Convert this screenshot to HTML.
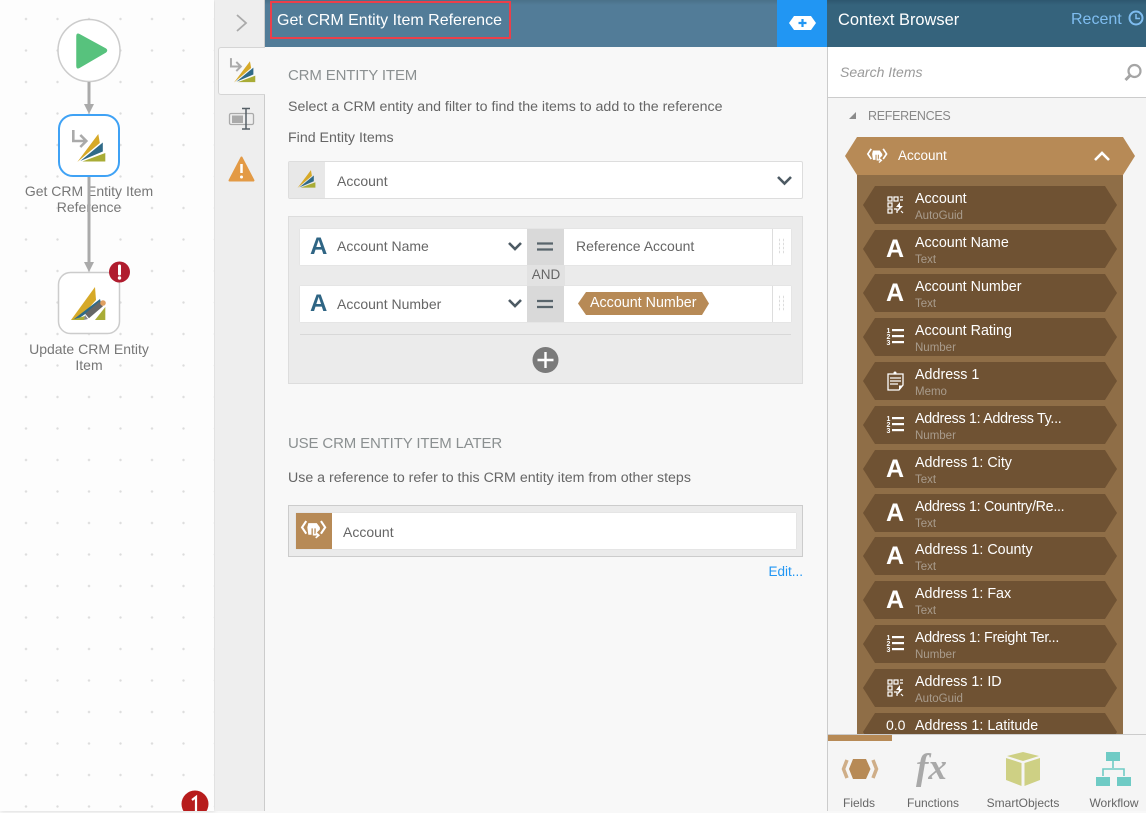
<!DOCTYPE html>
<html><head><meta charset="utf-8"><title>Get CRM Entity Item Reference</title>
<style>
html,body{margin:0;padding:0}
body{width:1146px;height:811px;overflow:hidden;position:relative;background:#f8f8f8;font-family:"Liberation Sans",sans-serif;font-size:14px;color:#666}
.a{position:absolute}
.t{position:absolute;white-space:nowrap;line-height:20px}
.c{text-align:center}
#canvas{left:0;top:0;width:214px;height:811px;background-color:#fdfdfd;background-image:radial-gradient(circle at center,#dcdcdc 0,#dcdcdc 1px,transparent 1.3px);background-size:31.5px 31.5px;background-position:10.25px 3.25px;box-shadow:1px 0 4px rgba(0,0,0,.15)}
#strip{left:215px;top:0;width:49px;height:811px;background:#eee;border-right:1px solid #ccc}
#tab{left:218px;top:47px;width:47px;height:48px;background:#f8f8f8;border:1px solid #d5d5d5;border-right:none;border-radius:3px 0 0 3px;box-sizing:border-box}
#head{left:265px;top:0;width:512px;height:47px;background:linear-gradient(#4a7189 0,#527c98 5px)}
#plus{left:777px;top:0;width:50px;height:47px;background:#2196f3}
#chead{left:827px;top:0;width:319px;height:47px;background:linear-gradient(#2d576f 0,#35637c 5px)}
#redbox{left:270px;top:1px;width:237px;height:34px;border:2px solid #ec3f4a}
#panel{left:827px;top:47px;width:319px;height:764px;background:#f5f5f5;border-left:1px solid #ccc;box-sizing:border-box}
#search{left:828px;top:47px;width:318px;height:50px;background:#fff;border-bottom:1px solid #ccc}
#fold{left:845px;top:137px;width:290px;height:38px;background:#b78a56;clip-path:polygon(12px 0,278px 0,100% 50%,278px 100%,12px 100%,0 50%)}
#list{left:857px;top:175px;width:266px;height:559px;background:#8f6e47;overflow:hidden}
.r{position:absolute;left:6px;width:254px;height:38px;background:#6f5233;clip-path:polygon(12px 0,242px 0,100% 50%,242px 100%,12px 100%,0 50%)}
.r b{position:absolute;left:52px;top:3px;font-weight:normal;font-size:14.3px;line-height:20px;color:#fff;white-space:nowrap}
.r i{position:absolute;left:52px;top:22px;font-style:normal;font-size:11.5px;line-height:16px;color:#a99c8d;white-space:nowrap}
.r u{position:absolute;left:18px;top:4px;width:28px;text-align:center;text-decoration:none;font-weight:bold;font-size:25px;line-height:30px;color:#fff}
.r b.n{letter-spacing:-.3px}
#bot{left:828px;top:734px;width:318px;height:77px;background:#f5f5f5;border-top:1px solid #ccc;box-sizing:border-box}
#bar{left:828px;top:735px;width:64px;height:6px;background:#b78a56}
#icons{position:absolute;left:0;top:0;pointer-events:none}
.h{font-size:15px;letter-spacing:-.15px;color:#8b9091}
.lbl{color:#777;font-size:14px;width:170px;left:4px;text-align:center}
.tb{font-size:12px;color:#666;text-align:center;width:90px;top:793px}
</style></head>
<body>
<div class="a" id="canvas"></div>
<div class="a" id="strip"></div>
<div class="a" id="tab"></div>
<div class="a" id="head"></div>
<div class="a" id="plus"></div>
<div class="a" id="chead"></div>
<div class="a" id="redbox"></div>
<div class="a" id="panel"></div>
<div class="a" id="search"></div>

<div class="t" style="left:277px;top:11px;font-size:16px;color:#fff">Get CRM Entity Item Reference</div>
<div class="t" style="left:838px;top:10px;font-size:16.4px;color:#fff">Context Browser</div>
<div class="t" style="left:1071px;top:10px;font-size:16px;color:#7fbdf0">Recent</div>
<div class="t" style="left:840px;top:62px;font-style:italic;color:#9a9a9a">Search Items</div>
<div class="t" style="left:868px;top:106px;color:#888;font-size:12.5px;letter-spacing:-.3px">REFERENCES</div>

<div class="t lbl" style="top:181px">Get CRM Entity Item</div>
<div class="t lbl" style="top:197px">Reference</div>
<div class="t lbl" style="top:339px">Update CRM Entity</div>
<div class="t lbl" style="top:355px">Item</div>

<div class="t h" style="left:288px;top:66px">CRM ENTITY ITEM</div>
<div class="t" style="left:288px;top:97px;font-size:14.2px">Select a CRM entity and filter to find the items to add to the reference</div>
<div class="t" style="left:288px;top:128px;font-size:14.2px">Find Entity Items</div>

<div class="a" style="left:288px;top:161px;width:513px;height:36px;background:#fff;border:1px solid #ddd;border-radius:2px"></div>
<div class="a" style="left:289px;top:162px;width:36px;height:36px;background:#e8e8e8"></div>
<div class="t" style="left:337px;top:171px;color:#666">Account</div>

<div class="a" style="left:288px;top:216px;width:513px;height:166px;background:#ebebeb;border:1px solid #ddd"></div>
<div class="a" style="left:300px;top:229px;width:491px;height:36px;background:#fff;box-shadow:0 0 1px #ccc"></div>
<div class="a" style="left:300px;top:286px;width:491px;height:36px;background:#fff;box-shadow:0 0 1px #ccc"></div>
<div class="a" style="left:527px;top:229px;width:37px;height:36px;background:#d9d9d9"></div>
<div class="a" style="left:527px;top:265px;width:38px;height:21px;background:#e2e2e2"></div>
<div class="a" style="left:527px;top:286px;width:37px;height:36px;background:#d9d9d9"></div>
<div class="a" style="left:772px;top:229px;width:1px;height:36px;background:#ddd"></div>
<div class="a" style="left:772px;top:286px;width:1px;height:36px;background:#ddd"></div>
<div class="a" style="left:300px;top:334px;width:491px;height:1px;background:#d8d8d8"></div>
<div class="t" style="left:310px;top:232px;font-weight:bold;font-size:24px;line-height:30px;color:#2f6584">A</div>
<div class="t" style="left:310px;top:289px;font-weight:bold;font-size:24px;line-height:30px;color:#2f6584">A</div>
<div class="t" style="left:337px;top:236px;color:#666">Account Name</div>
<div class="t" style="left:337px;top:294px;color:#666">Account Number</div>
<div class="t" style="left:576px;top:236px;color:#666">Reference Account</div>
<div class="t c" style="left:527px;top:265px;width:38px;color:#666;font-size:13.5px">AND</div>
<div class="a" style="left:578px;top:292px;width:131px;height:23px;background:#b78a56;clip-path:polygon(8px 0,124px 0,100% 50%,124px 100%,8px 100%,0 50%)"></div>
<div class="t" style="left:590px;top:293px;color:#fff;font-size:14.3px">Account Number</div>

<div class="t h" style="left:288px;top:434px">USE CRM ENTITY ITEM LATER</div>
<div class="t" style="left:288px;top:468px;font-size:14.2px">Use a reference to refer to this CRM entity item from other steps</div>
<div class="a" style="left:288px;top:505px;width:513px;height:50px;background:#ebebeb;border:1px solid #ccc"></div>
<div class="a" style="left:296px;top:513px;width:500px;height:36px;background:#fff;box-shadow:0 0 1px #ccc"></div>
<div class="a" style="left:296px;top:513px;width:36px;height:36px;background:#b78a56"></div>
<div class="t" style="left:343px;top:522px;color:#666">Account</div>
<div class="t" style="right:343px;top:562px;color:#2196f3;font-size:13.5px">Edit...</div>

<div class="a" id="fold"></div>
<div class="t" style="left:898px;top:146px;color:#fff;font-size:13.5px">Account</div>

<div class="a" id="list">
<div class="r" style="top:11px"><svg class="a" style="left:18px;top:5px" width="28" height="28"><use href="#guid"/></svg><b>Account</b><i>AutoGuid</i></div>
<div class="r" style="top:55px"><u>A</u><b>Account Name</b><i>Text</i></div>
<div class="r" style="top:99px"><u>A</u><b>Account Number</b><i>Text</i></div>
<div class="r" style="top:143px"><svg class="a" style="left:18px;top:5px" width="28" height="28"><use href="#num"/></svg><b>Account Rating</b><i>Number</i></div>
<div class="r" style="top:187px"><svg class="a" style="left:18px;top:5px" width="28" height="28"><use href="#memo"/></svg><b>Address 1</b><i>Memo</i></div>
<div class="r" style="top:231px"><svg class="a" style="left:18px;top:5px" width="28" height="28"><use href="#num"/></svg><b class="n">Address 1: Address Ty...</b><i>Number</i></div>
<div class="r" style="top:275px"><u>A</u><b>Address 1: City</b><i>Text</i></div>
<div class="r" style="top:319px"><u>A</u><b class="n">Address 1: Country/Re...</b><i>Text</i></div>
<div class="r" style="top:362px"><u>A</u><b>Address 1: County</b><i>Text</i></div>
<div class="r" style="top:406px"><u>A</u><b>Address 1: Fax</b><i>Text</i></div>
<div class="r" style="top:450px"><svg class="a" style="left:18px;top:5px" width="28" height="28"><use href="#num"/></svg><b class="n">Address 1: Freight Ter...</b><i>Number</i></div>
<div class="r" style="top:494px"><svg class="a" style="left:18px;top:5px" width="28" height="28"><use href="#guid"/></svg><b>Address 1: ID</b><i>AutoGuid</i></div>
<div class="r" style="top:538px"><div class="t" style="left:23px;top:2px;color:#fff;font-size:14px">0.0</div><b>Address 1: Latitude</b></div>
</div>

<div class="a" id="bot"></div>
<div class="a" id="bar"></div>
<div class="t tb" style="left:814px">Fields</div>
<div class="t tb" style="left:888px">Functions</div>
<div class="t tb" style="left:978px">SmartObjects</div>
<div class="t tb" style="left:1069px">Workflow</div>
<div class="t" style="left:916px;top:749px;font-family:'Liberation Serif',serif;font-style:italic;font-weight:bold;font-size:37px;line-height:38px;color:#a9a9a9">fx</div>

<svg id="icons" width="1146" height="811" viewBox="0 0 1146 811">
<defs>
<g id="crm"><polygon points="0,0 21,-28 22.5,-19" fill="#d6a928"/><polygon points="3,-1 25.5,-19.5 25.5,-10.5" fill="#2f6a88"/><polygon points="5,-.5 28,-9 28,-.5" fill="#a9ac36"/></g>
<g id="arr" fill="none" stroke="#aaa" stroke-width="2.6"><path d="M-4,-32V-21H8.5M3,-27L9,-21L3,-15"/></g>
<g id="ref" fill="none" stroke="#fff"><path d="M5,1L1,7L5,13M19,1L23,7L19,13" stroke-width="2"/><path d="M7,3H15L18,7V9L15,12H14V8H10V14H7L6,7Z" fill="#fff" stroke="none"/><path d="M12,7V14H16M14,12L17,14.500L14,17" stroke-width="1.500"/></g>
<g id="guid" fill="none" stroke="#fff" stroke-width="1.200"><rect x="7" y="6" width="4" height="4"/><rect x="13" y="6" width="4" height="4"/><rect x="7" y="12" width="4" height="4"/><rect x="7" y="18" width="4" height="4"/><path d="M19,6h3M19,9h3M13,18h3v4M20,20l2,2"/><path d="M19,11L15,16H18L16,21L22,15H19Z" fill="#fff" stroke="none"/></g>
<g id="num" fill="#fff"><rect x="11" y="6" width="12" height="2.200"/><rect x="11" y="12" width="12" height="2.200"/><rect x="11" y="18" width="12" height="2.200"/><text x="5.500" y="10" font-size="7" font-weight="bold" font-family="Liberation Sans">1</text><text x="5.500" y="16" font-size="7" font-weight="bold" font-family="Liberation Sans">2</text><text x="5.500" y="22" font-size="7" font-weight="bold" font-family="Liberation Sans">3</text></g>
<g id="memo"><path d="M7,7H22V18L18,23H7Z" fill="none" stroke="#fff" stroke-width="1.300"/><path d="M9,11H20M9,14H20M9,17H17" stroke="#fff" stroke-width="1.300"/><circle cx="14" cy="6" r="1.500" fill="#fff"/><path d="M18,23V18.500H22Z" fill="#fff"/></g>
</defs>

<!-- flow -->
<circle cx="89" cy="50.500" r="31" fill="#fff" stroke="#ccc" stroke-width="1.500"/>
<path d="M79,34.500L105.500,49Q107.500,50.500 105.500,52L79,67.500Q77,68.500 77,66V36Q77,33.500 79,34.500Z" fill="#57c27d" stroke="#57c27d" stroke-width="1.500"/>
<path d="M89,82V105M89,177V264" stroke="#aaa" stroke-width="3"/>
<polygon points="84,104 94,104 89,114" fill="#aaa"/>
<polygon points="84,262 94,262 89,272" fill="#aaa"/>
<rect x="59" y="115" width="60" height="61" rx="14" fill="#fff" stroke="#3fa2f5" stroke-width="2"/>
<use href="#arr" transform="translate(77.300,162)"/><use href="#crm" transform="translate(77.300,162)"/>
<rect x="58.500" y="272.500" width="61" height="61" rx="12" fill="#fff" stroke="#ccc" stroke-width="1.500"/>
<polygon points="71,320 95,287 96,300 78,320" fill="#d6a928"/>
<polygon points="74,319 100,299 101,303 78,319" fill="#2f6a88"/>
<polygon points="71,320 85,316 84,320" fill="#a9ac36"/><polygon points="95,320 105.300,307 105.300,320" fill="#a9ac36"/>
<path d="M87,316L101,304" stroke="#666" stroke-width="6"/><circle cx="103" cy="303" r="2.800" fill="#e0a060"/><polygon points="85,315 88,319 84,320" fill="#888"/>
<circle cx="119.500" cy="272" r="10.500" fill="#b01c2e"/>
<path d="M119.500,266V274" stroke="#fff" stroke-width="3" stroke-linecap="round"/><circle cx="119.500" cy="278" r="1.700" fill="#fff"/>
<circle cx="195" cy="804" r="13.500" fill="#b71c1c"/>
<path d="M192,800L196,797V811" fill="none" stroke="#fff" stroke-width="2.200"/>

<!-- side strip -->
<path d="M237,15L246,23L237,31" fill="none" stroke="#aaa" stroke-width="1.800"/>
<g transform="translate(234,82.500) scale(.76)"><use href="#arr"/><use href="#crm"/></g>
<rect x="229.500" y="113.500" width="24" height="11" rx="1.500" fill="none" stroke="#aaa" stroke-width="1.300"/><rect x="232" y="115.500" width="11" height="7.500" fill="#aaa"/>
<path d="M242,108.500H250M246,108.500V129M242,129H250" stroke="#555f66" stroke-width="1.500" fill="none"/>
<path d="M241.500,157.500L253.500,180.500H229.500Z" fill="#e39a45" stroke="#e39a45" stroke-width="2" stroke-linejoin="round"/>
<path d="M241.500,164V173" stroke="#fff" stroke-width="2.500"/><circle cx="241.500" cy="177" r="1.500" fill="#fff"/>

<!-- head plus -->
<polygon points="789,23 794,16 811,16 816,23 811,30 794,30" fill="#fff"/>
<path d="M802.500,19V27M798.500,23H806.500" stroke="#2196f3" stroke-width="2.200"/>
<circle cx="1136" cy="18" r="6.500" fill="none" stroke="#7fbdf0" stroke-width="2"/><path d="M1136,14V18.500H1140" fill="none" stroke="#7fbdf0" stroke-width="1.500"/>
<circle cx="1134.500" cy="71" r="6" fill="none" stroke="#a5a5a5" stroke-width="2.200"/><path d="M1130,75.500L1125.500,80" stroke="#a5a5a5" stroke-width="3"/>
<polygon points="849,119 856,119 856,112" fill="#8b8b8b"/>

<!-- select -->
<g transform="translate(297.500,188) scale(.64)"><use href="#crm"/></g>
<path d="M778,177L784.500,183.500L791,177" fill="none" stroke="#4d5a63" stroke-width="2.600"/>
<path d="M509,243L515,249L521,243M509,300L515,306L521,300" fill="none" stroke="#4d5a63" stroke-width="2.600"/>
<path d="M537,243.500H553M537,249.500H553M537,301H553M537,307H553" stroke="#59656c" stroke-width="2.200"/>
<path d="M779,240h1M783,240h1M779,244h1M783,244h1M779,248h1M783,248h1M779,252h1M783,252h1M779,297h1M783,297h1M779,301h1M783,301h1M779,305h1M783,305h1M779,309h1M783,309h1" stroke="#ddd" stroke-width="2.500"/>
<circle cx="545.500" cy="360" r="13" fill="#7a7a7a"/>
<path d="M545.500,352V368M537.500,360H553.500" stroke="#fff" stroke-width="2.400"/>

<use href="#ref" transform="translate(301,520) scale(1.050)"/>
<use href="#ref" transform="translate(867,148) scale(.85)"/>
<path d="M1095,160L1102,153L1109,160" fill="none" stroke="#fff" stroke-width="2.600"/>

<!-- bottom tabs -->
<polygon points="853,759 866,759 870.500,769 866,779 853,779 849,769" fill="#b78a56"/>
<path d="M847,760L843.500,769L847,778M873,760L876.500,769L873,778" fill="none" stroke="#cfae88" stroke-width="3.500"/>
<polygon points="1023,752 1039,756 1023,761 1007,756" fill="#ced084"/>
<polygon points="1006,758 1021.500,763 1021.500,786 1006,780" fill="#ced084"/>
<polygon points="1040,758 1024.500,763 1024.500,786 1040,780" fill="#ced084"/>
<g fill="#6fcbc5"><rect x="1106" y="752" width="14" height="9"/><rect x="1096" y="777" width="14" height="9"/><rect x="1117" y="777" width="14" height="9"/></g>
<path d="M1113,761V768M1103,776V769H1124V776" fill="none" stroke="#6fcbc5" stroke-width="1.600"/>
</svg>
</body></html>
